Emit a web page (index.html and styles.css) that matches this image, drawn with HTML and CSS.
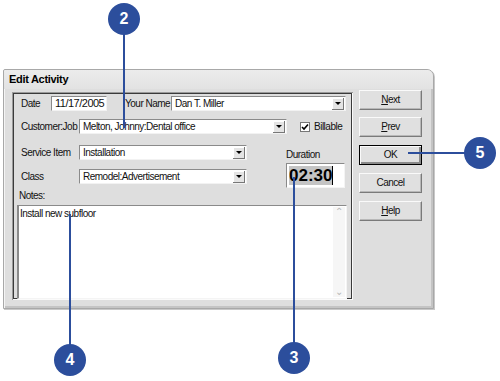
FILE: index.html
```html
<!DOCTYPE html>
<html lang="en">
<head>
    <meta charset="UTF-8">
    <title>Edit Activity</title>
    <link rel="stylesheet" href="styles.css">
</head>
<body>
<div class="screen">
    <div class="dialog">
        <div class="titlebar">Edit Activity</div>
        <div class="dialog-body">
            <div class="group">
                <div class="row">
                    <span class="label label-date">Date</span>
                    <span class="field field-date">11/17/2005</span>
                    <span class="label label-name">Your Name</span>
                    <span class="field combo combo-name">Dan T. Miller<span class="arrow"></span></span>
                </div>
                <div class="row row-job">
                    <span class="label label-wide">Customer:Job</span>
                    <span class="field combo combo-job">Melton, Johnny:Dental office<span class="arrow"></span></span>
                    <span class="check">
                        <svg width="8" height="8" viewBox="0 0 8 8"><path d="M1 4 L3 6 L7 1.5" fill="none" stroke="#000" stroke-width="1.6"/></svg>
                    </span>
                    <span class="label">Billable</span>
                </div>
                <div class="split">
                    <div class="split-left">
                        <div class="row">
                            <span class="label label-wide">Service Item</span>
                            <span class="field combo combo-short">Installation<span class="arrow"></span></span>
                        </div>
                        <div class="row">
                            <span class="label label-wide">Class</span>
                            <span class="field combo combo-short">Remodel:Advertisement<span class="arrow"></span></span>
                        </div>
                    </div>
                    <div class="duration">
                        <div class="label">Duration</div>
                        <div class="duration-box"><span class="duration-sel">02:30</span><span class="caret"></span></div>
                    </div>
                </div>
                <div class="notes-label">Notes:</div>
                <div class="notes">
                    <span class="notes-text">Install new subfloor</span>
                    <div class="scrollbar">
                        <span class="scroll-up">&#8963;</span>
                        <span class="scroll-down">&#8964;</span>
                    </div>
                </div>
            </div>
            <div class="buttons">
                <div class="btn"><u>N</u>ext</div>
                <div class="btn btn-prev"><u>P</u>rev</div>
                <div class="btn btn-default">OK</div>
                <div class="btn">Cancel</div>
                <div class="btn"><u>H</u>elp</div>
            </div>
        </div>
    </div>

    <div class="line line-2"></div>
    <div class="line line-5"></div>
    <div class="line line-3"></div>
    <div class="line line-4"></div>
    <div class="callout callout-2">2</div>
    <div class="callout callout-5">5</div>
    <div class="callout callout-3">3</div>
    <div class="callout callout-4">4</div>
</div>
</body>
</html>
```

FILE: styles.css
```css
body {
    margin: 0;
    background-color: white;
    font-family: "Liberation Sans", Arial, sans-serif;
    font-size: 10px;
    letter-spacing: -0.5px;
    color: #111;
}

.screen {
    position: relative;
    width: 500px;
    height: 381px;
    padding: 69px 0 0 3px;
    box-sizing: border-box;
    overflow: hidden;
}

.dialog {
    width: 431px;
    height: 240px;
    box-sizing: border-box;
    background-color: #dedede;
    border: 1px solid #a8a8a8;
    border-radius: 2px 7px 0 0;
    box-shadow: inset 1px 1px 0 #f4f4f4, inset -2px -2px 0 #c4c4c4, 1px 1px 0 #c8c8c8;
}

.titlebar {
    height: 19px;
    line-height: 19px;
    padding-left: 5px;
    font-weight: bold;
    font-size: 11px;
    letter-spacing: -0.3px;
    color: #000;
    background: linear-gradient(#ececec, #e2e2e2);
    border-radius: 2px 6px 0 0;
}

.dialog-body {
    display: flex;
    align-items: flex-start;
    padding: 3px 0 0 8px;
    gap: 6px;
}

.group {
    width: 341px;
    height: 208px;
    box-sizing: border-box;
    padding: 4px 0 0 5px;
    box-shadow: inset 1px 1px 0 #9a9a9a, inset -1px -1px 0 #fafafa, inset 2px 2px 0 #3a3a3a, inset -2px -2px 0 #3a3a3a;
}

.row {
    display: flex;
    align-items: center;
    height: 15px;
    padding-left: 4px;
}

.label {
    white-space: nowrap;
}

.label-date {
    width: 30px;
}

.label-name {
    width: 46px;
    margin-left: 18px;
}

.label-wide {
    width: 58px;
}

.field {
    position: relative;
    height: 15px;
    line-height: 13px;
    box-sizing: border-box;
    padding-left: 3px;
    background-color: white;
    border-top: 1px solid #8a8a8a;
    border-left: 1px solid #8a8a8a;
    border-right: 1px solid #f2f2f2;
    border-bottom: 1px solid #f2f2f2;
    white-space: nowrap;
}

.field-date {
    width: 56px;
    font-size: 11px;
}

.combo-name {
    width: 175px;
}

.combo-job {
    width: 208px;
}

.combo-short {
    width: 168px;
}

.arrow {
    position: absolute;
    right: 1px;
    top: 1px;
    width: 11px;
    height: 11px;
    background-color: #e4e4e4;
    border-right: 1px solid #777;
    border-bottom: 1px solid #777;
    box-shadow: inset 1px 1px 0 white;
}

.arrow::after {
    content: "";
    position: absolute;
    left: 3px;
    top: 4px;
    border-left: 3px solid transparent;
    border-right: 3px solid transparent;
    border-top: 3px solid #000;
}

.row-job {
    margin-top: 8px;
}

.check {
    display: flex;
    align-items: center;
    justify-content: center;
    width: 10px;
    height: 10px;
    box-sizing: border-box;
    margin: 0 4px 0 13px;
    background-color: white;
    border: 1px solid #777;
}

.split {
    display: flex;
    margin-top: 11px;
    height: 43px;
}

.split-left {
    display: flex;
    flex-direction: column;
    gap: 9px;
    width: 247px;
}

.duration {
    margin-left: 22px;
    padding-top: 4px;
}

.duration .label {
    height: 12px;
    line-height: 12px;
}

.duration-box {
    display: flex;
    align-items: center;
    width: 59px;
    height: 25px;
    box-sizing: border-box;
    margin-top: 2px;
    padding-left: 2px;
    background-color: white;
    border-top: 1px solid #8a8a8a;
    border-left: 1px solid #8a8a8a;
    border-right: 1px solid #f4f4f4;
    border-bottom: 1px solid #f4f4f4;
}

.duration-sel {
    font-weight: bold;
    font-size: 17px;
    letter-spacing: 0;
    line-height: 19px;
    color: #000;
    background-color: #c4c4c4;
}

.caret {
    width: 1px;
    height: 19px;
    background-color: #000;
}

.notes-label {
    height: 12px;
    line-height: 12px;
    margin-top: 2px;
    padding-left: 2px;
}

.notes {
    display: flex;
    justify-content: space-between;
    width: 330px;
    height: 94px;
    box-sizing: border-box;
    margin-top: 3px;
    background-color: white;
    border-top: 1px solid #8a8a8a;
    border-left: 2px solid #8a8a8a;
    border-right: 1px solid #f4f4f4;
    border-bottom: 1px solid #f4f4f4;
}

.notes-text {
    padding: 2px 0 0 1px;
}

.scrollbar {
    display: flex;
    flex-direction: column;
    justify-content: space-between;
    width: 12px;
    margin: 1px;
    background-color: #f6f6f6;
    color: #b8b8b8;
    font-size: 10px;
    line-height: 10px;
    text-align: center;
}

.buttons {
    display: flex;
    flex-direction: column;
    gap: 8px;
    margin-top: -2px;
}

.btn {
    width: 63px;
    height: 20px;
    box-sizing: border-box;
    line-height: 18px;
    text-align: center;
    color: #111;
    background-color: #e0e0e0;
    border-top: 1px solid #fafafa;
    border-left: 1px solid #fafafa;
    border-right: 1px solid #7a7a7a;
    border-bottom: 1px solid #7a7a7a;
    box-shadow: inset -1px -1px 0 #b8b8b8;
}

.btn-prev {
    margin-top: -1px;
}

.btn-default {
    border: 1px solid #000;
    box-shadow: inset 1px 1px 0 #fafafa, inset -2px -2px 0 #8a8a8a;
}

.line {
    position: absolute;
    background-color: #2c4e9c;
}

.line-2 {
    left: 123px;
    top: 34px;
    width: 2px;
    height: 94px;
}

.line-5 {
    left: 408px;
    top: 152px;
    width: 58px;
    height: 2px;
}

.line-3 {
    left: 293px;
    top: 177px;
    width: 2px;
    height: 168px;
}

.line-4 {
    left: 69px;
    top: 214px;
    width: 2px;
    height: 132px;
}

.callout {
    position: absolute;
    width: 32px;
    height: 32px;
    border-radius: 50%;
    background-color: #2c4e9c;
    color: white;
    font-weight: bold;
    font-size: 16px;
    letter-spacing: 0;
    line-height: 32px;
    text-align: center;
}

.callout-2 {
    left: 108px;
    top: 3px;
}

.callout-5 {
    left: 464px;
    top: 137px;
}

.callout-3 {
    left: 278px;
    top: 342px;
}

.callout-4 {
    left: 54px;
    top: 344px;
}
```
